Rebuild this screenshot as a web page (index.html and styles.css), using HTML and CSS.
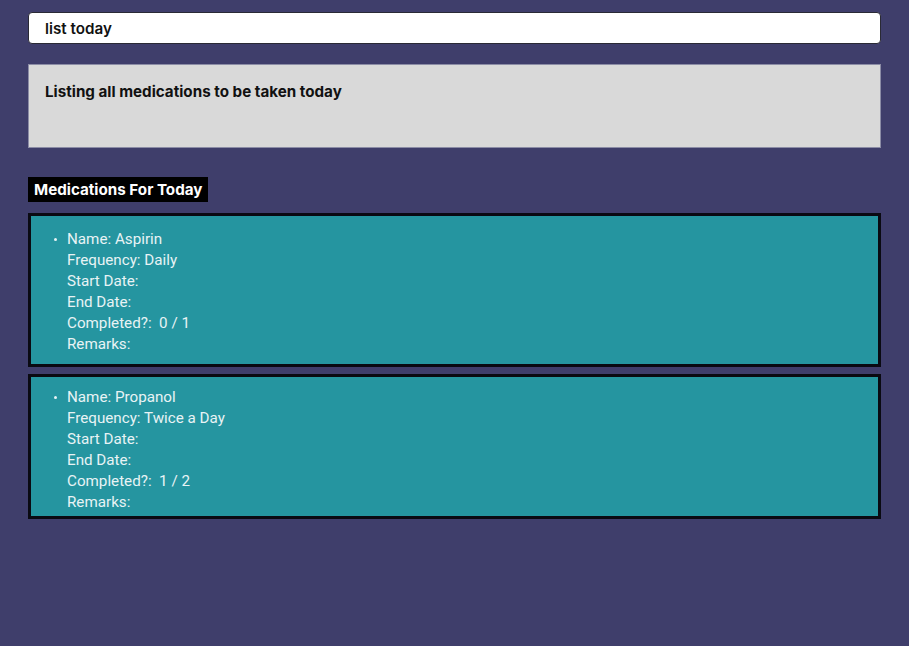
FILE: index.html
```html
<!DOCTYPE html>
<html lang="en">
<head>
<meta charset="utf-8">
<title>Medications</title>
<link rel="stylesheet" href="styles.css">
</head>
<body>
<main class="app">
  <div class="command-box">list today</div>
  <div class="result-box">Listing all medications to be taken today</div>
  <section class="list-section">
    <h2 class="list-title">Medications For Today</h2>
    <div class="card card-first">
      <div class="entry">
        <span class="dot"></span>
        <div class="lines">
          <div>Name: Aspirin</div>
          <div>Frequency: Daily</div>
          <div>Start Date:</div>
          <div>End Date:</div>
          <div>Completed?:&nbsp; 0 / 1</div>
          <div>Remarks:</div>
        </div>
      </div>
    </div>
    <div class="card">
      <div class="entry">
        <span class="dot"></span>
        <div class="lines">
          <div>Name: Propanol</div>
          <div>Frequency: Twice a Day</div>
          <div>Start Date:</div>
          <div>End Date:</div>
          <div>Completed?:&nbsp; 1 / 2</div>
          <div>Remarks:</div>
        </div>
      </div>
    </div>
  </section>
</main>
</body>
</html>
```
FILE: styles.css
```css
html, body {
  margin: 0;
  padding: 0;
  background: #3f3e6b;
  height: 100%;
}
.app {
  padding: 12px 28px;
  display: flex;
  flex-direction: column;
  font-family: Inter, "Liberation Sans", sans-serif;
}
.command-box {
  height: 32px;
  box-sizing: border-box;
  background: #ffffff;
  border: 1px solid #2a2a35;
  border-radius: 4px;
  padding: 0 16px;
  display: flex;
  align-items: center;
  font-size: 15.2px;
  font-weight: 600;
  color: #111;
}
.result-box {
  margin-top: 20px;
  height: 84px;
  box-sizing: border-box;
  background: #d9d9d9;
  border: 1px solid #8c8da6;
  padding: 18px 16px 0;
  font-size: 15.2px;
  font-weight: 700;
  line-height: 18px;
  color: #111;
}
.list-section {
  margin-top: 29px;
  display: flex;
  flex-direction: column;
  align-items: flex-start;
}
.list-title {
  margin: 0;
  background: #000;
  color: #fff;
  font-size: 15.2px;
  font-weight: 700;
  height: 25px;
  line-height: 25px;
  padding: 0 6px;
}
.card {
  align-self: stretch;
  margin-top: 7px;
  background: #2595a0;
  border: 3px solid #0a0a12;
  padding: 10px 0 3px;
  font-family: Roboto, "Liberation Sans", sans-serif;
  font-size: 15.2px;
  line-height: 21px;
  color: #e8f3f5;
}
.card-first {
  margin-top: 11px;
  padding: 13px 0 9px;
}
.entry {
  display: flex;
  align-items: flex-start;
  padding-left: 23px;
}
.dot {
  width: 3px;
  height: 3px;
  border-radius: 50%;
  background: #e8f3f5;
  margin-top: 9px;
  margin-right: 10px;
  flex: none;
}
```
